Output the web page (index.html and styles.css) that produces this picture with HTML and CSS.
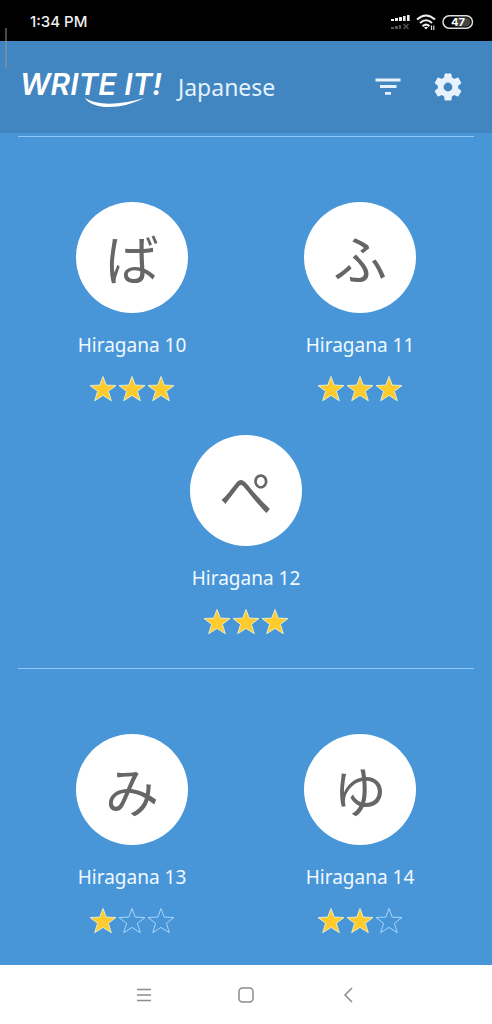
FILE: index.html
```html
<!DOCTYPE html>
<html lang="en">
<head>
<meta charset="utf-8">
<meta name="viewport" content="width=device-width, initial-scale=1">
<title>Write It! Japanese</title>
<link rel="stylesheet" href="styles.css">
</head>
<body>
<svg class="defs" aria-hidden="true">
  <symbol id="star" viewBox="0 0 28 26"><path d="M14 1 L17.2 9.6 L27 10 L19.4 15.8 L22.3 25.2 L14 19.9 L5.7 25.2 L8.6 15.8 L1 10 L10.8 9.6 Z"/></symbol>
</svg>
<div class="status">
  <time class="clock">1:34 PM</time>
  <svg class="status-icons" width="86" height="20" viewBox="0 0 86 20" aria-hidden="true">
    <g fill="#eee">
      <rect x="2" y="7" width="3" height="2"/><rect x="6" y="6" width="3" height="3"/><rect x="10" y="5" width="3" height="4"/><rect x="14" y="4" width="2.6" height="5"/><rect x="18" y="3" width="2.6" height="6"/>
    </g>
    <g fill="#555">
      <rect x="2" y="15" width="3" height="2"/><rect x="6" y="14" width="3" height="3"/><rect x="10" y="13" width="2" height="4"/>
    </g>
    <path d="M14.5 12 L19.5 17 M19.5 12 L14.5 17" stroke="#555" stroke-width="1.3"/>
    <g fill="none" stroke="#eee" stroke-width="2">
      <path d="M28 7.5 Q37 -0.5 46 7.5"/><path d="M31 11 Q37 5.500 43 11"/><path d="M33.500 14.2 Q37 11 40.500 14.2"/>
    </g>
    <path d="M35 15.500 Q37 14 39 15.500 L37 17.6 Z" fill="#eee"/>
    <path d="M42.5 18 V13.5 M44.8 13.5 V18" stroke="#ddd" stroke-width="1.2"/>
    <rect x="54" y="3.8" width="29.5" height="12.4" rx="6.2" fill="#000" stroke="#ddd" stroke-width="1.5"/>
    <path d="M68 5.5 H77 A4.5 4.5 0 0 1 77 14.5 H68 Z" fill="#444"/>
    <text class="battery" x="69" y="14" text-anchor="middle">47</text>
  </svg>
</div>
<header class="bar">
  <div class="logo">
    <h1 class="logo-text">WRITE IT!</h1>
    <svg class="swoosh" width="62" height="12" viewBox="0 0 62 12" aria-hidden="true"><path d="M1 1 C14 9 36 8 60 1 C40 12 9 14 1 1 Z" fill="#fff"/></svg>
  </div>
  <span class="language">Japanese</span>
  <button class="icon-button" aria-label="Filter"><svg width="26" height="18" viewBox="0 0 26 18"><path d="M0.5 2 H25.5 M5 8.5 H21.500 M10 15.300 H16" stroke="#e6f2fd" stroke-width="2.800"/></svg></button>
  <button class="icon-button" aria-label="Settings"><svg width="34" height="34" viewBox="0 0 24 24"><path fill="#e6f2fd" d="M19.14 12.94c.04-.3.06-.61.06-.94s-.02-.64-.07-.94l2.030-1.580a.49.49 0 0 0 .12-.61l-1.920-3.320a.49.49 0 0 0-.59-.22l-2.390.96a7 7 0 0 0-1.620-.94l-.36-2.540A.48.48 0 0 0 13.920 2.400h-3.840a.48.48 0 0 0-.47.41l-.36 2.540a7 7 0 0 0-1.620.94l-2.390-.96a.48.48 0 0 0-.59.22L2.740 8.870a.48.48 0 0 0 .12.61l2.030 1.580a6 6 0 0 0 0 1.880l-2.030 1.580a.49.49 0 0 0-.12.61l1.920 3.320c.12.22.37.29.59.22l2.390-.96c.5.38 1.030.7 1.620.94l.36 2.540c.05.24.24.41.48.41h3.840c.24 0 .44-.17.47-.41l.36-2.540a7 7 0 0 0 1.620-.94l2.390.96c.22.08.47 0 .59-.22l1.920-3.320a.48.48 0 0 0-.12-.61zM12 15.100a3.100 3.100 0 1 1 0-6.200 3.100 3.100 0 0 1 0 6.200z"/></svg></button>
</header>
<main class="levels">
  <section class="group">
    <button class="card">
      <span class="kana" lang="ja">ば</span><span class="label">Hiragana 10</span>
      <span class="stars" role="img" aria-label="3 of 3 stars"><svg class="star full"><use href="#star"/></svg><svg class="star full"><use href="#star"/></svg><svg class="star full"><use href="#star"/></svg></span>
    </button>
    <button class="card">
      <span class="kana" lang="ja">ふ</span><span class="label">Hiragana 11</span>
      <span class="stars" role="img" aria-label="3 of 3 stars"><svg class="star full"><use href="#star"/></svg><svg class="star full"><use href="#star"/></svg><svg class="star full"><use href="#star"/></svg></span>
    </button>
    <button class="card">
      <span class="kana" lang="ja">ぺ</span><span class="label">Hiragana 12</span>
      <span class="stars" role="img" aria-label="3 of 3 stars"><svg class="star full"><use href="#star"/></svg><svg class="star full"><use href="#star"/></svg><svg class="star full"><use href="#star"/></svg></span>
    </button>
  </section>
  <section class="group">
    <button class="card">
      <span class="kana" lang="ja">み</span><span class="label">Hiragana 13</span>
      <span class="stars" role="img" aria-label="1 of 3 stars"><svg class="star full"><use href="#star"/></svg><svg class="star"><use href="#star"/></svg><svg class="star"><use href="#star"/></svg></span>
    </button>
    <button class="card">
      <span class="kana" lang="ja">ゆ</span><span class="label">Hiragana 14</span>
      <span class="stars" role="img" aria-label="2 of 3 stars"><svg class="star full"><use href="#star"/></svg><svg class="star full"><use href="#star"/></svg><svg class="star"><use href="#star"/></svg></span>
    </button>
  </section>
</main>
<nav class="system-nav" aria-label="System">
  <button class="nav-button" aria-label="Recent apps"><svg width="16" height="16" viewBox="0 0 16 16"><path d="M1 2.500 H15 M1 8 H15 M1 13.500 H15"/></svg></button>
  <button class="nav-button" aria-label="Home"><svg width="16" height="16" viewBox="0 0 16 16"><rect x="1" y="1" width="14" height="14" rx="3.500"/></svg></button>
  <button class="nav-button" aria-label="Back"><svg width="16" height="16" viewBox="0 0 16 16"><path d="M12 1 L5 8 L12 15"/></svg></button>
</nav>
<div class="edge-handle"></div>
</body>
</html>
```
FILE: styles.css
```css
* {
  box-sizing: border-box;
}

body {
  margin: 0;
  min-height: 100vh;
  display: flex;
  flex-direction: column;
  background: #4896d8;
  color: #f0f9ff;
  font-family: "Noto Sans", "Noto Sans CJK JP", sans-serif;
}

button {
  margin: 0;
  padding: 0;
  border: 0;
  background: none;
  color: inherit;
  font: inherit;
  cursor: pointer;
}

svg {
  display: block;
}

.defs {
  position: absolute;
  width: 0;
  height: 0;
}

.status {
  display: flex;
  align-items: center;
  justify-content: space-between;
  height: 41px;
  padding: 2px 17px 0 30px;
  background: #000;
}

.clock {
  color: #eee;
  font: 500 15px/20px Inter, sans-serif;
}

.battery {
  fill: #fff;
  font: 700 11px Inter, sans-serif;
}

.bar {
  display: flex;
  align-items: center;
  height: 92px;
  padding: 0 27px 0 20px;
  background: #4186c1;
}

.logo {
  position: relative;
  padding-bottom: 6px;
}

.logo-text {
  margin: 0;
  color: #fff;
  font: italic 600 30px/36px Inter, sans-serif;
}

.swoosh {
  position: absolute;
  left: 64px;
  top: 31px;
}

.language {
  margin: 0 auto 0 16px;
  color: #e3f1fd;
  font-size: 23px;
  line-height: 32px;
}

.icon-button {
  display: grid;
  place-items: center;
  width: 34px;
  height: 48px;
}

.icon-button + .icon-button {
  margin-left: 26px;
}

.levels {
  flex: 1;
  padding: 3px 18px 0;
}

.group {
  display: flex;
  flex-wrap: wrap;
  justify-content: center;
  row-gap: 33px;
  padding: 65px 0 33px;
  border-top: 1px solid #8fc8f8;
}

.group:last-child {
  padding-bottom: 30px;
}

.card {
  display: flex;
  flex-direction: column;
  align-items: center;
  width: 50%;
}

.kana {
  display: grid;
  place-items: center;
  width: 112px;
  height: 111px;
  border-radius: 50%;
  background: #fff;
  color: #666;
  font: 400 54px/80px "Noto Sans CJK JP", sans-serif;
}

.label {
  margin-top: 19px;
  font-size: 19px;
  line-height: 26px;
}

.stars {
  display: flex;
  gap: 1px;
  margin-top: 17px;
}

.star {
  width: 28px;
  height: 27px;
  fill: none;
  stroke: #a9d6fb;
  stroke-width: 1;
}

.star.full {
  fill: #fecb2f;
  stroke: #e6ecc8;
}

.system-nav {
  display: flex;
  align-items: center;
  justify-content: center;
  gap: 54px;
  height: 59px;
  background: #fff;
}

.nav-button {
  display: grid;
  place-items: center;
  width: 48px;
  height: 48px;
}

.nav-button svg {
  fill: none;
  stroke: #8c8c8c;
  stroke-width: 1.5;
}

.edge-handle {
  position: absolute;
  left: 5px;
  top: 28px;
  width: 2px;
  height: 40px;
  background: rgba(150, 150, 150, 0.5);
}
```
